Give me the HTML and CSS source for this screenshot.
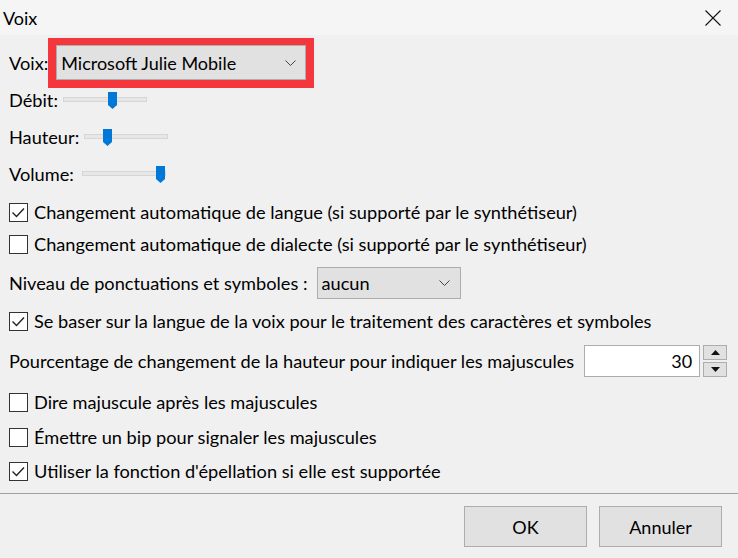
FILE: index.html
```html
<!DOCTYPE html>
<html lang="fr">
<head>
<meta charset="utf-8">
<title>Voix</title>
<link rel="stylesheet" href="styles.css">
</head>
<body>
<div class="dialog">
  <div class="titlebar">
    <span class="title">Voix</span>
    <svg class="close" width="16" height="16" viewBox="0 0 16 16"><path d="M0.5 0.5 L15.5 15.5 M15.5 0.5 L0.5 15.5" stroke="#111" stroke-width="1.1" fill="none"/></svg>
  </div>
  <div class="content">
    <div class="row voice-row">
      <span class="label">Voix:</span>
      <div class="highlight">
        <div class="combo combo-voice">
          <span>Microsoft Julie Mobile</span>
          <svg class="chev" width="11" height="6" viewBox="0 0 11 6"><path d="M0.5 0.5 L5.5 5.5 L10.5 0.5" stroke="#444" stroke-width="1" fill="none"/></svg>
        </div>
      </div>
    </div>

    <div class="row slider-row r-debit">
      <span class="label">Débit:</span>
      <div class="slider"><div class="track"></div><svg class="thumb" style="left:45px" width="9" height="17" viewBox="0 0 9 17"><path d="M0 0 H9 V13 L4.5 17 L0 13 Z" fill="#0078d7"/></svg></div>
    </div>
    <div class="row slider-row r-gap13">
      <span class="label">Hauteur:</span>
      <div class="slider"><div class="track"></div><svg class="thumb" style="left:19px" width="9" height="17" viewBox="0 0 9 17"><path d="M0 0 H9 V13 L4.5 17 L0 13 Z" fill="#0078d7"/></svg></div>
    </div>
    <div class="row slider-row r-gap13">
      <span class="label">Volume:</span>
      <div class="slider slider-wide"><div class="track"></div><svg class="thumb" style="left:74px" width="9" height="17" viewBox="0 0 9 17"><path d="M0 0 H9 V13 L4.5 17 L0 13 Z" fill="#0078d7"/></svg></div>
    </div>

    <label class="row check-row r-cb1"><span class="box"><svg width="19" height="19" viewBox="0 0 19 19"><path d="M3.5 9.5 L7.5 13.5 L15 5.5" stroke="#222" stroke-width="1.4" fill="none"/></svg></span><span>Changement automatique de langue (si supporté par le synthétiseur)</span></label>
    <label class="row check-row r-cb2"><span class="box"></span><span>Changement automatique de dialecte (si supporté par le synthétiseur)</span></label>

    <div class="row r-niveau">
      <span class="label">Niveau de ponctuations et symboles :</span>
      <div class="combo combo-level">
        <span>aucun</span>
        <svg class="chev" width="11" height="6" viewBox="0 0 11 6"><path d="M0.5 0.5 L5.5 5.5 L10.5 0.5" stroke="#444" stroke-width="1" fill="none"/></svg>
      </div>
    </div>

    <label class="row check-row r-cb3"><span class="box"><svg width="19" height="19" viewBox="0 0 19 19"><path d="M3.5 9.5 L7.5 13.5 L15 5.5" stroke="#222" stroke-width="1.4" fill="none"/></svg></span><span>Se baser sur la langue de la voix pour le traitement des caractères et symboles</span></label>

    <div class="row r-pct">
      <span class="label">Pourcentage de changement de la hauteur pour indiquer les majuscules</span>
      <div class="spin">
        <div class="spin-input">30</div>
        <div class="spin-btns">
          <div class="spin-btn"><svg width="9" height="5" viewBox="0 0 9 5"><path d="M0 5 L4.5 0 L9 5 Z" fill="#111"/></svg></div>
          <div class="spin-btn"><svg width="9" height="5" viewBox="0 0 9 5"><path d="M0 0 L4.5 5 L9 0 Z" fill="#111"/></svg></div>
        </div>
      </div>
    </div>

    <label class="row check-row r-cb4"><span class="box"></span><span>Dire majuscule après les majuscules</span></label>
    <label class="row check-row r-cb5"><span class="box"></span><span>Émettre un bip pour signaler les majuscules</span></label>
    <label class="row check-row r-cb6"><span class="box"><svg width="19" height="19" viewBox="0 0 19 19"><path d="M3.5 9.5 L7.5 13.5 L15 5.5" stroke="#222" stroke-width="1.4" fill="none"/></svg></span><span>Utiliser la fonction d'épellation si elle est supportée</span></label>
  </div>
  <div class="separator"></div>
  <div class="footer">
    <button class="btn">OK</button>
    <button class="btn">Annuler</button>
  </div>
</div>
</body>
</html>
```

FILE: styles.css
```css
html, body {
  margin: 0;
  padding: 0;
}
body {
  width: 738px;
  height: 558px;
  overflow: hidden;
  background: #f0f0f0;
  font-family: Lato, "Noto Sans", sans-serif;
  font-size: 18.2px;
  color: #000;
}
.dialog {
  display: flex;
  flex-direction: column;
  height: 558px;
}
.titlebar {
  height: 35px;
  background: #f5f5f5;
  display: flex;
  align-items: center;
  justify-content: space-between;
  padding: 0 17px 0 3px;
  flex: none;
}
.title {
  font-size: 18px;
  margin-top: 1px;
}
.close {
  display: block;
}
.content {
  display: flex;
  flex-direction: column;
  padding-left: 9px;
}
.row {
  display: flex;
  align-items: center;
  height: 24px;
  flex: none;
}
.voice-row {
  margin-top: 3px;
  height: 50px;
}
.highlight {
  border: 8px solid #f4373c;
  border-top-width: 7px;
  margin-left: 0;
}
.combo {
  display: flex;
  align-items: center;
  justify-content: space-between;
  box-sizing: border-box;
  background: #e1e1e1;
  border: 1px solid #adadad;
}
.combo-voice {
  width: 250px;
  height: 35px;
  padding: 0 9px 0 4px;
  font-size: 18px;
}
.combo-level {
  width: 144px;
  height: 32px;
  padding: 0 10px 0 3px;
  margin-left: 10px;
}
.chev {
  display: block;
}
.slider {
  position: relative;
  width: 84px;
  height: 17px;
  margin-left: 5px;
}
.slider-wide {
  margin-left: 8px;
}
.track {
  position: absolute;
  left: 0;
  right: 0;
  top: 5px;
  height: 5px;
  box-sizing: border-box;
  background: #e7e7e7;
  border: 1px solid #d6d6d6;
}
.thumb {
  position: absolute;
  top: 0;
  display: block;
}
.r-gap13 { margin-top: 13px; }
.check-row {
  gap: 6px;
}
.box {
  width: 19px;
  height: 19px;
  box-sizing: border-box;
  border: 1px solid #333;
  background: #fff;
  position: relative;
  flex: none;
}
.box svg {
  position: absolute;
  left: -1px;
  top: -1px;
}
.r-cb1 { margin-top: 14px; }
.r-cb2 { margin-top: 8px; }
.r-niveau { margin-top: 11px; height: 32px; }
.r-cb3 { margin-top: 10px; }
.r-pct { margin-top: 12px; height: 32px; }
.r-cb4 { margin-top: 13px; }
.r-cb5 { margin-top: 11px; }
.r-cb6 { margin-top: 10px; }
.spin {
  display: flex;
  gap: 3px;
  margin-left: 10px;
}
.spin-input {
  width: 116px;
  height: 32px;
  box-sizing: border-box;
  background: #fff;
  border: 1px solid #adadad;
  display: flex;
  align-items: center;
  justify-content: flex-end;
  padding-right: 7px;
  font-size: 18px;
}
.spin-btns {
  display: flex;
  flex-direction: column;
  gap: 2px;
}
.spin-btn {
  width: 24px;
  height: 15px;
  box-sizing: border-box;
  background: #e1e1e1;
  border: 1px solid #adadad;
  display: flex;
  align-items: center;
  justify-content: center;
}
.spin-btn svg { display: block; }
.separator {
  margin-top: 10px;
  height: 1px;
  background: #a0a0a0;
  flex: none;
}
.footer {
  display: flex;
  justify-content: flex-end;
  gap: 12px;
  padding: 12px 16px 0 0;
}
.btn {
  width: 123px;
  height: 41px;
  box-sizing: border-box;
  background: #e1e1e1;
  border: 1px solid #adadad;
  font-family: Lato, "Noto Sans", sans-serif;
  font-size: 18px;
  color: #000;
  padding: 0;
}
```
